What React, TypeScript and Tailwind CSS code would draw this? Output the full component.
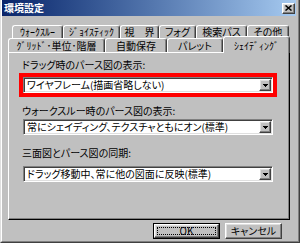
import type { FC } from 'react';

const raised =
    'border border-t-white border-l-white border-r-[#404040] border-b-[#404040] shadow-[inset_-1px_-1px_0_#808080,inset_1px_1px_0_#dfdfdf]';
const sunken =
    'border border-t-[#808080] border-l-[#808080] border-r-white border-b-white shadow-[inset_1px_1px_0_#404040,inset_-1px_-1px_0_#dfdfdf]';

const DownArrow: FC = () => (
    <svg width="5" height="3" viewBox="0 0 5 3" shapeRendering="crispEdges">
        <rect x="0" y="0" width="5" height="1" fill="#000" />
        <rect x="1" y="1" width="3" height="1" fill="#000" />
        <rect x="2" y="2" width="1" height="1" fill="#000" />
    </svg>
);

const Combo: FC<{ text: string }> = ({ text }) => (
    <div className={`w-[250px] h-[16px] flex items-center bg-white ${sunken}`}>
        <span className="flex-1 pl-[3px] leading-[14px] whitespace-nowrap">{text}</span>
        <span className={`w-[12px] h-[12px] mr-px flex items-center justify-center bg-[#c0c0c0] ${raised}`}>
            <DownArrow />
        </span>
    </div>
);

const Tab: FC<{ label: string; w: string; selected?: boolean }> = ({ label, w, selected }) => (
    <div
        className={`${w} ${
            selected ? 'h-[17px] -mt-[2px] pt-[2px] self-start relative z-10' : 'h-full'
        } flex items-center justify-center bg-[#c0c0c0] border-l border-t border-r border-l-white border-t-white border-r-[#404040] rounded-t-[3px] shadow-[inset_-1px_0_0_#808080] whitespace-nowrap leading-none`}
    >
        {label}
    </div>
);

export default function App() {
    return (
        <div className="w-[300px] h-[243px] bg-[#c0c0c0] border-l border-r border-b border-l-[#dfdfdf] border-r-[#404040] border-b-[#404040] font-['Noto_Sans_CJK_JP',sans-serif] text-[10px] text-black [font-feature-settings:'palt'] overflow-hidden">
            <div className="h-full border-l border-r border-b border-l-white border-r-[#808080] border-b-[#808080] pr-[2px] flex flex-col">
                {/* Title bar */}
                <div className="h-[16px] flex items-center justify-between bg-linear-to-r from-[#0a246a] to-[#a6caf0]">
                    <span className="pl-[2px] text-white font-bold text-[10px] leading-none">環境設定</span>
                    <span className={`w-[13px] h-[11px] mr-px flex items-center justify-center bg-[#c0c0c0] ${raised}`}>
                        <svg width="7" height="6" viewBox="0 0 7 6">
                            <path d="M0.5 0.5L6.5 5.5M6.5 0.5L0.5 5.5" stroke="#000" strokeWidth="1.5" />
                        </svg>
                    </span>
                </div>

                {/* Tab rows */}
                <div className="mt-[9px] ml-[10px] h-[13px] flex">
                    <Tab label="ｳｫｰｸｽﾙｰ" w="w-[51px]" />
                    <Tab label="ｼﾞｮｲｽﾃｨｯｸ" w="w-[57px]" />
                    <Tab label="視　界" w="w-[39px]" />
                    <Tab label="フォグ" w="w-[37px]" />
                    <Tab label="検索パス" w="w-[51px]" />
                    <Tab label="その他" w="w-[42px]" />
                </div>
                <div className="ml-[6px] h-[14px] flex">
                    <Tab label="ｸﾞﾘｯﾄﾞ･単位･階層" w="w-[97px]" />
                    <Tab label="自動保存" w="w-[62px]" />
                    <Tab label="パレット" w="w-[56px]" />
                    <Tab label="ｼｪｲﾃﾞｨﾝｸﾞ" w="w-[67px]" selected />
                </div>

                {/* Panel */}
                <div className="ml-[6px] w-[282px] h-[168px] flex flex-col border border-t-white border-l-white border-r-black border-b-black shadow-[inset_-1px_-1px_0_#808080]">
                    <div className="mt-[6px] pl-[13px] leading-[12px]">ドラッグ時のパース図の表示:</div>
                    <div className="mt-[2px] ml-[10px] w-[258px] border-4 border-[#ff0000]">
                        <Combo text="ワイヤフレーム(描画省略しない)" />
                    </div>
                    <div className="mt-[8px] pl-[13px] leading-[12px]">ウォークスルー時のパース図の表示:</div>
                    <div className="mt-[2px] ml-[14px]">
                        <Combo text="常にシェイディング、テクスチャともにオン(標準)" />
                    </div>
                    <div className="mt-[12px] pl-[13px] leading-[12px]">三面図とパース図の同期:</div>
                    <div className="mt-[7px] ml-[14px]">
                        <Combo text="ドラッグ移動中、常に他の図面に反映(標準)" />
                    </div>
                </div>

                {/* Buttons */}
                <div className="mt-[3px] flex justify-end gap-[5px] pr-[14px]">
                    <div className="w-[67px] h-[16px] border border-black flex">
                        <div className={`flex-1 flex p-[2px] ${raised}`}>
                            <div className="flex-1 flex items-center justify-center border border-dotted border-black leading-none">
                                OK
                            </div>
                        </div>
                    </div>
                    <div className={`w-[57px] h-[16px] flex items-center justify-center leading-none ${raised}`}>
                        キャンセル
                    </div>
                </div>
            </div>
        </div>
    );
}
